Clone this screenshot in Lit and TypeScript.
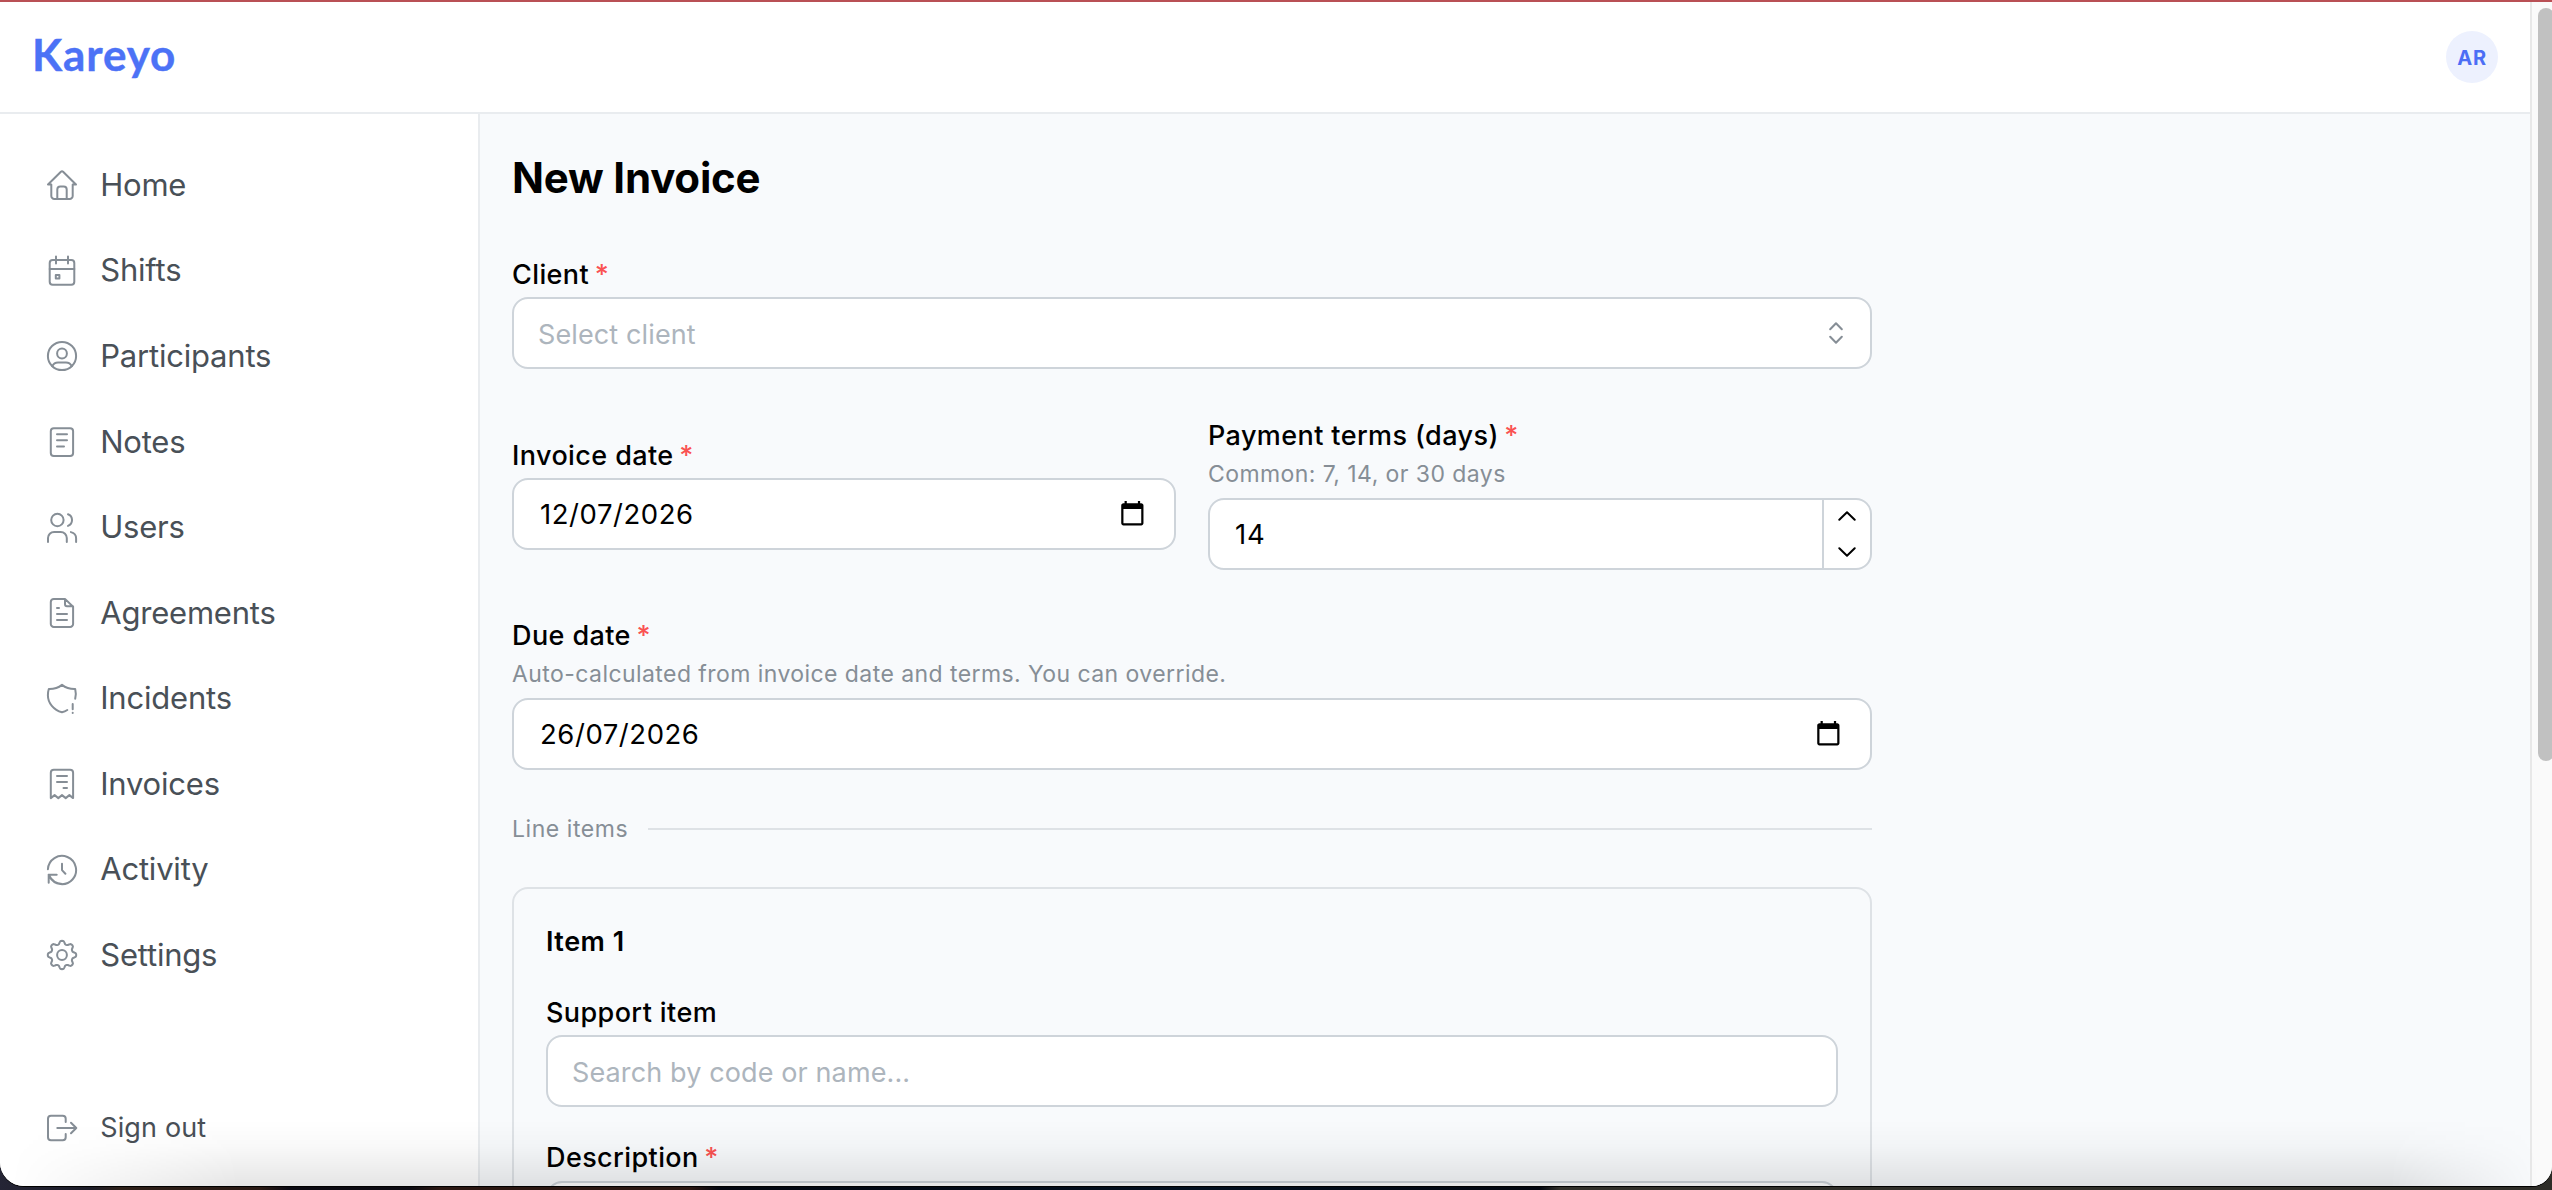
import { LitElement, html, css, svg, TemplateResult } from "lit";
import { customElement, property } from "lit/decorators.js";

const gearPath = (() => {
  const points: string[] = [];
  for (let i = 0; i < 96; i++) {
    const t = (i / 96) * Math.PI * 2;
    const r = 12.6 + 1.75 * Math.tanh(1.6 * Math.cos(8 * t));
    points.push(`${(16 + r * Math.cos(t)).toFixed(2)} ${(16 + r * Math.sin(t)).toFixed(2)}`);
  }
  return `M${points.join("L")}Z`;
})();

const icons: Record<string, TemplateResult> = {
  home: svg`<path d="M5.3 15.5H2L14.9 2.7a1.6 1.6 0 0 1 2.2 0L30 15.5h-3.3v11.4a3 3 0 0 1-3 3H8.3a3 3 0 0 1-3-3zM11.3 29.7v-9.3a3 3 0 0 1 3-3h3.4a3 3 0 0 1 3 3v9.3"/>`,
  shifts: svg`<rect x="3.7" y="5" width="24.6" height="24.7" rx="3"/><path d="M3.7 14h24.6M10 1.6v7M22 1.6v7"/><rect x="9.8" y="20" width="3.6" height="3.6"/>`,
  participants: svg`<circle cx="16" cy="16" r="14.1"/><circle cx="16" cy="13.5" r="4.9"/><path d="M6.2 26.2C7.4 23.8 9.4 22.5 12 22.5h8c2.6 0 4.6 1.3 5.8 3.7"/>`,
  notes: svg`<rect x="4.8" y="2.2" width="22.3" height="27.9" rx="3"/><path d="M11 8.3h10M11 14.3h10M11 20.6h7"/>`,
  users: svg`<circle cx="11.4" cy="8" r="6.2"/><path d="M22 2.3a6.2 6.2 0 0 1 0 11.6M2 29.9v-3.8a6.1 6.1 0 0 1 6.1-6.1h6.6a6.1 6.1 0 0 1 6.1 6.1v3.8M24.9 20.1c3.2.8 5.2 3.2 5.2 6.2v3.6"/>`,
  agreements: svg`<path d="M19 1.9H7.8a3 3 0 0 0-3 3v22a3 3 0 0 0 3 3h16.3a3 3 0 0 0 3-3V9.7zM19 2v5.3a2 2 0 0 0 2 2h6M11 11h2M11 17h10M11 23h10"/>`,
  incidents: svg`<path d="M21.3 27q-2.4 1.6-5.3 2.3C7.7 27 1.9 20 1.9 12.5Q1.8 9 2.8 6q7.7.2 13.2-4.1Q21.5 6.2 29.2 6q1.2 4.5 0 9.7M26.7 21v5.2M26.7 29.8v.3"/>`,
  invoices: svg`<path d="M4.8 30.1V4.7a3 3 0 0 1 3-3h16.3a3 3 0 0 1 3 3v25.4l-3.7-3-3.7 3-3.7-3-3.7 3-3.7-3zM11 8h10M11 14h10M17.5 20H21"/>`,
  activity: svg`<path d="M1.9 15.3A14.1 14.1 0 1 1 3.6 22.8M2.7 28.7v-8h8M2.7 20.7Q7 29.5 16 30.1M16 9.8v6.3l3.4 3.6"/>`,
  settings: svg`<path d=${gearPath} /><circle cx="16" cy="16" r="4.9"/>`,
  signout: svg`<path d="M19.7 10V6.7a3 3 0 0 0-3-3H5a3 3 0 0 0-3 3v18.6a3 3 0 0 0 3 3h11.7a3 3 0 0 0 3-3V22M11.3 16h18.8M25 10.8l5.3 5.2-5.3 5.2"/>`,
};

@customElement("nav-item")
class NavItem extends LitElement {
  @property() icon = "home";
  @property() label = "";
  @property({ type: Boolean }) small = false;
  static styles = css`
    :host { display: block; }
    .item { display: flex; align-items: center; height: 85.56px; padding-left: 46px; gap: 22.2px; color: #495057; font-size: 31px; letter-spacing: -0.2px; }
    .item.small { font-size: 27px; letter-spacing: 0.15px; }
    .text { padding-bottom: 2px; }
    svg { width: 32px; height: 32px; flex: none; fill: none; stroke: #868e96; stroke-width: 2; stroke-linecap: round; stroke-linejoin: round; }
  `;
  render() {
    return html`<div class="item ${this.small ? "small" : ""}">
      <svg viewBox="0 0 32 32">${icons[this.icon]}</svg><span class="text">${this.label}</span>
    </div>`;
  }
}

@customElement("form-field")
class FormField extends LitElement {
  @property() label = "";
  @property() description = "";
  @property({ type: Boolean }) required = false;
  static styles = css`
    :host { display: block; }
    .label { height: 42px; line-height: 44px; font-size: 27px; font-weight: 500; letter-spacing: 0.4px; margin-bottom: 2px; color: #000; }
    .label.tight { margin-bottom: 0; }
    .star { color: #fa5252; margin-left: -2px; }
    .description { height: 34px; line-height: 36px; font-size: 23px; letter-spacing: 0.43px; color: #868e96; margin-bottom: 8px; }
  `;
  render() {
    return html`
      <div class="label ${this.description ? "tight" : ""}">${this.label}${this.required ? html`<span class="star"> *</span>` : ""}</div>
      ${this.description ? html`<div class="description">${this.description}</div>` : ""}
      <slot></slot>
    `;
  }
}

const calendar = html`<svg class="calendar" viewBox="0 0 24 24"><path d="M20 3h-1V1h-2v2H7V1H5v2H4c-1.1 0-2 .9-2 2v16c0 1.1.9 2 2 2h16c1.1 0 2-.9 2-2V5c0-1.1-.9-2-2-2zm0 18H4V8h16v13z"/></svg>`;

@customElement("app-root")
class AppRoot extends LitElement {
  static styles = css`
    :host { display: block; font-family: Inter, "Liberation Sans", sans-serif; color: #000; }
    * { box-sizing: border-box; }
    .screen { height: 1190px; overflow: hidden; background: linear-gradient(90deg, #252535 0, #1c1c28 90px, #2e2019 120px, #2a1a14 260px, #0b0a12 290px, #0c0b12 410px, #2b1712 440px, #2b1712 690px, #02060f 720px, #031020 1200px, #02060f 1540px, #32312b 1560px, #2e2d28 2552px); }
    .window { position: relative; height: 1186px; display: flex; border-top: 2px solid #b95055; border-radius: 0 0 20px 24px; overflow: hidden; background: #fff; box-shadow: 0 1px 0 #000; }
    .page { flex: 1; display: flex; flex-direction: column; min-width: 0; }
    .header { height: 112px; flex: none; border-bottom: 2px solid #e9ecef; display: flex; align-items: center; justify-content: space-between; padding: 0 32px; background: #fff; }
    .logo { font-family: Lato, sans-serif; font-weight: 700; font-size: 44px; line-height: 52px; padding-bottom: 6px; color: #4c72f6; letter-spacing: 0.9px; -webkit-text-stroke: 0.4px #4c72f6; }
    .avatar { width: 52px; height: 52px; border-radius: 50%; background: #edf1fe; color: #4c6ef5; font-size: 20px; font-weight: 700; letter-spacing: 0.6px; display: flex; align-items: center; justify-content: center; padding-top: 1px; }
    .body { flex: 1; display: flex; min-height: 0; }
    .sidebar { width: 480px; flex: none; border-right: 2px solid #e9ecef; background: #fff; display: flex; flex-direction: column; justify-content: space-between; padding: 28.6px 0 15px; }
    .main { flex: 1; background: #f8fafc; padding: 32px; overflow: hidden; }
    .form { width: 1360px; }
    h1 { margin: 0 0 44px; height: 63px; line-height: 63px; font-size: 42px; font-weight: 700; letter-spacing: -0.2px; }
    .input { height: 72px; border: 2px solid #ced4da; border-radius: 16px; background: #fff; display: flex; align-items: center; justify-content: space-between; padding: 0 27px 0 24px; font-size: 27px; letter-spacing: 0.12px; }
    .placeholder { color: #adb5bd; padding-top: 2px; }
    .date { padding: 0 28px 0 26px; font-size: 27.5px; letter-spacing: 0.55px; }
    .calendar { width: 26.7px; height: 26.7px; fill: #000; margin-bottom: 2px; }
    .selector { width: 14px; height: 22px; fill: none; stroke: #868e96; stroke-width: 2; stroke-linecap: round; stroke-linejoin: round; }
    .row { display: grid; grid-template-columns: 1fr 1fr; gap: 32px; align-items: center; margin: 45px 0 44.4px; }
    .number { padding: 0 0 0 25px; overflow: hidden; font-size: 27.5px; letter-spacing: 0.8px; }
    .stepper { width: 48px; height: 100%; border-left: 2px solid #ced4da; display: flex; flex-direction: column; align-items: center; justify-content: space-between; padding: 11px 0; }
    .stepper svg { width: 18px; height: 10px; fill: none; stroke: #000; stroke-width: 2; stroke-linecap: round; stroke-linejoin: round; }
    .divider { display: flex; align-items: center; gap: 20px; height: 34px; margin: 42px 0 41px; font-size: 23px; letter-spacing: 0.55px; color: #868e96; }
    .rule { flex: 1; height: 2px; background: #dee2e6; }
    .card { border: 2px solid #dee2e6; border-radius: 16px; padding: 32px; height: 600px; }
    .item-title { height: 41px; line-height: 41px; font-size: 27px; font-weight: 600; letter-spacing: 0.5px; margin-bottom: 29px; }
    .next { margin-top: 29px; }
    .next .input { margin-top: 3px; }
    .scrollbar { width: 22px; flex: none; background: #fafafa; border-left: 2px solid #e8e8e8; padding: 6px 0 0 6px; overflow: hidden; }
    .thumb { width: 16px; height: 753px; border-radius: 8px; background: #c1c1c1; }
    .shade { position: absolute; left: 0; right: 0; bottom: 0; height: 66px; pointer-events: none; background: linear-gradient(to bottom, rgba(0,0,0,0), rgba(0,0,0,0.025) 40%, rgba(0,0,0,0.1)); -webkit-mask-image: linear-gradient(90deg, transparent 10px, #000 240px, #000 2390px, transparent 2540px); mask-image: linear-gradient(90deg, transparent 10px, #000 240px, #000 2390px, transparent 2540px); }
  `;
  private nav = ["Home", "Shifts", "Participants", "Notes", "Users", "Agreements", "Incidents", "Invoices", "Activity", "Settings"];
  render() {
    return html`
      <div class="screen"><div class="window">
        <div class="page">
          <div class="header"><div class="logo">Kareyo</div><div class="avatar">AR</div></div>
          <div class="body">
            <div class="sidebar">
              <nav>${this.nav.map((n) => html`<nav-item icon=${n.toLowerCase()} label=${n}></nav-item>`)}</nav>
              <nav-item icon="signout" label="Sign out" small></nav-item>
            </div>
            <div class="main"><div class="form">
              <h1>New Invoice</h1>
              <form-field label="Client" required>
                <div class="input"><span class="placeholder">Select client</span>
                  <svg class="selector" viewBox="0 0 14 22"><path d="M1.2 7.2 7 1.2l5.8 6M1.2 14.8l5.8 6 5.8-6"/></svg></div>
              </form-field>
              <div class="row">
                <form-field label="Invoice date" required>
                  <div class="input date"><span>12/07/2026</span>${calendar}</div>
                </form-field>
                <form-field label="Payment terms (days)" description="Common: 7, 14, or 30 days" required>
                  <div class="input number"><span>14</span>
                    <div class="stepper">
                      <svg viewBox="0 0 18 10"><path d="M1.3 8.7 9 1.3l7.7 7.4"/></svg>
                      <svg viewBox="0 0 18 10"><path d="M1.3 1.3 9 8.7l7.7-7.4"/></svg>
                    </div></div>
                </form-field>
              </div>
              <form-field label="Due date" description="Auto-calculated from invoice date and terms. You can override." required>
                <div class="input date"><span>26/07/2026</span>${calendar}</div>
              </form-field>
              <div class="divider"><span>Line items</span><div class="rule"></div></div>
              <div class="card">
                <div class="item-title">Item 1</div>
                <form-field label="Support item">
                  <div class="input"><span class="placeholder">Search by code or name...</span></div>
                </form-field>
                <form-field class="next" label="Description" required>
                  <div class="input"></div>
                </form-field>
              </div>
            </div></div>
          </div>
        </div>
        <div class="scrollbar"><div class="thumb"></div></div>
        <div class="shade"></div>
      </div></div>
    `;
  }
}
